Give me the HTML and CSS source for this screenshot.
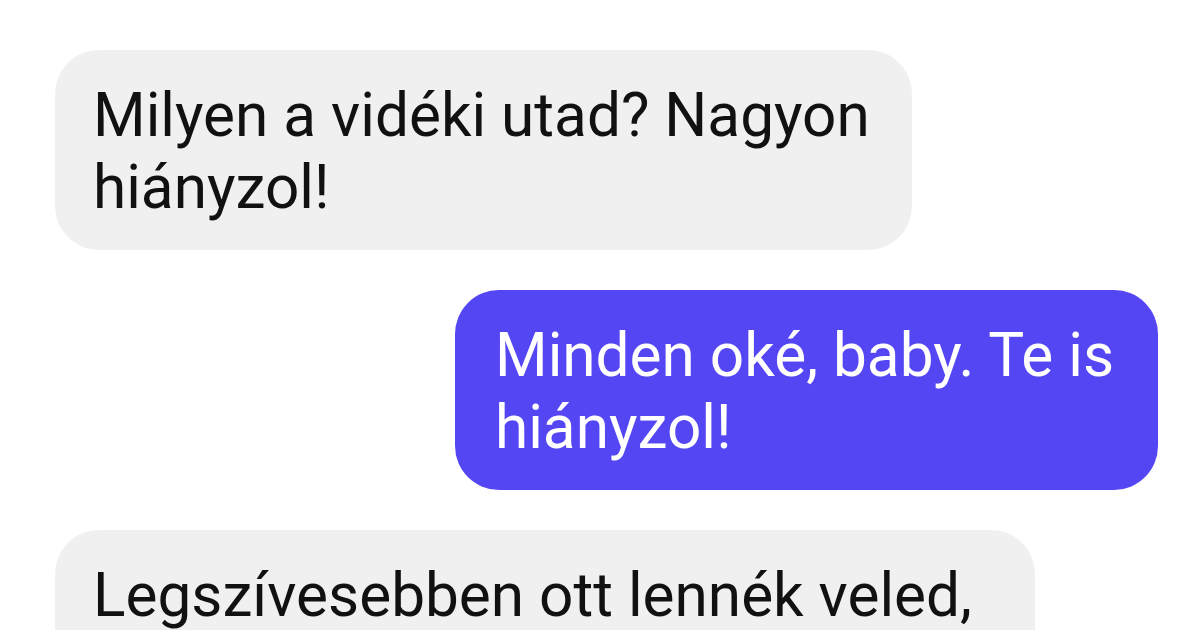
FILE: index.html
```html
<!DOCTYPE html>
<html lang="hu">
<head>
<meta charset="utf-8">
<title>Chat</title>
<link rel="stylesheet" href="styles.css">
</head>
<body>
<div class="chat">
  <div class="bubble bubble--in bubble--w1">Milyen a vidéki utad? Nagyon hiányzol!</div>
  <div class="bubble bubble--out bubble--w2">Minden oké, baby. Te is hiányzol!</div>
  <div class="bubble bubble--in bubble--w3 bubble--cut">Legszívesebben ott lennék veled,</div>
</div>
</body>
</html>
```
FILE: styles.css
```css
html, body {
  margin: 0;
  padding: 0;
  background: #ffffff;
  overflow: hidden;
}
body {
  width: 1200px;
  height: 630px;
  font-family: Roboto, "Noto Sans", sans-serif;
}
.chat {
  display: flex;
  flex-direction: column;
  gap: 40px;
  padding: 50px 42px 0 55px;
}
.bubble {
  box-sizing: border-box;
  font-size: 60.3px;
  line-height: 72px;
  padding: 30px 30px 26px 38px;
  border-radius: 44px;
  letter-spacing: 0;
}
.bubble--in {
  align-self: flex-start;
  background: #f0f0f0;
  color: #111111;
}
.bubble--out {
  align-self: flex-end;
  background: #5546f4;
  color: #ffffff;
  padding-left: 40px;
}
.bubble--w1 { width: 857px; }
.bubble--w2 { width: 703px; }
.bubble--w3 { width: 980px; }
.bubble--cut { padding-bottom: 120px; }
```
